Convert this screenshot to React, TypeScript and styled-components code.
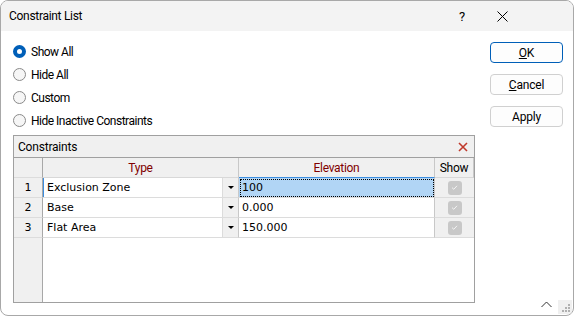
import React from 'react';
import styled, { createGlobalStyle } from 'styled-components';

const GlobalStyle = createGlobalStyle`
  html, body { margin: 0; padding: 0; background: #ffffff; }
  body { font-family: Roboto, 'Noto Sans', sans-serif; font-size: 12px; color: #000; letter-spacing: -0.2px; }
`;

const Window = styled.div`
  width: 574px;
  height: 316px;
  box-sizing: border-box;
  border: 1px solid #a8a8a8;
  border-radius: 8px;
  overflow: hidden;
  display: flex;
  flex-direction: column;
  background: #fff;
  position: relative;
`;

const TitleBar = styled.div`
  height: 30px;
  flex: 0 0 30px;
  background: #f3f3f3;
  display: flex;
  align-items: center;
  padding: 0 51px 0 8px;
  font-size: 12px;
  letter-spacing: -0.3px;
`;

const Title = styled.div`
  flex: 1;
`;

const TitleButton = styled.div`
  width: 40px;
  display: flex;
  justify-content: center;
  align-items: center;
  font-size: 13px;
`;

const Body = styled.div`
  flex: 1;
  display: flex;
  padding: 9px 10px 0 12px;
`;

const LeftCol = styled.div`
  display: flex;
  flex-direction: column;
  width: 462px;
`;

const RadioList = styled.div`
  display: flex;
  flex-direction: column;
  height: 95px;
`;

const RadioRow = styled.label`
  display: flex;
  align-items: center;
  height: 23px;
  gap: 5px;
  letter-spacing: -0.5px;
`;

const RadioDot = styled.span<{ $on?: boolean }>`
  width: 13px;
  height: 13px;
  box-sizing: border-box;
  border-radius: 50%;
  background: ${(p) => (p.$on ? '#ffffff' : '#f6f6f6')};
  border: ${(p) => (p.$on ? '4px solid #005fb8' : '1px solid #8a8a8a')};
`;

const Panel = styled.div`
  border: 1px solid #a0a0a0;
  height: 168px;
  box-sizing: border-box;
  display: flex;
  flex-direction: column;
`;

const PanelHead = styled.div`
  height: 21px;
  background: #f0f0f0;
  border-bottom: 1px solid #a0a0a0;
  display: flex;
  align-items: center;
  justify-content: space-between;
  padding: 0 6px 0 4px;
`;

const Grid = styled.div`
  flex: 1;
  display: grid;
  grid-template-columns: 29px 196px 196px 39px;
  grid-template-rows: 20px 20px 20px 20px 1fr;
  font-family: 'DejaVu Sans', sans-serif;
  font-size: 11px;
  letter-spacing: 0;
`;

const HeadCell = styled.div<{ $maroon?: boolean; $active?: boolean }>`
  background: #f0f0f0;
  border-right: 1px solid #c8c8c8;
  border-bottom: 1px solid ${(p) => (p.$active ? '#3d8ee0' : '#d8d8d8')};
  color: ${(p) => (p.$maroon ? '#800000' : '#000')};
  display: flex;
  align-items: center;
  justify-content: center;
  font-family: Roboto, 'Noto Sans', sans-serif;
  font-size: 12px;
  letter-spacing: -0.3px;
  &:last-child { border-right: none; }
`;

const NumCell = styled.div<{ $fill?: boolean }>`
  background: #f0f0f0;
  border-right: 1px solid #a8a8a8;
  border-bottom: ${(p) => (p.$fill ? 'none' : '1px solid #dcdcdc')};
  display: flex;
  align-items: center;
  justify-content: center;
`;

const TypeCell = styled.div<{ $current?: boolean }>`
  border-right: 1px solid #c8c8c8;
  border-bottom: 1px solid #dcdcdc;
  box-shadow: ${(p) => (p.$current ? 'inset 1px 0 0 #3d8ee0' : 'none')};
  display: flex;
  align-items: stretch;
`;

const TypeText = styled.span`
  flex: 1;
  display: flex;
  align-items: center;
  padding-left: 4px;
`;

const DropButton = styled.span`
  width: 15px;
  background: #f0f0f0;
  border-left: 1px solid #dcdcdc;
  display: flex;
  align-items: center;
  justify-content: center;
  &::after {
    content: '';
    border-left: 3px solid transparent;
    border-right: 3px solid transparent;
    border-top: 3px solid #000;
  }
`;

const ValueCell = styled.div<{ $selected?: boolean }>`
  border-right: 1px solid #c8c8c8;
  border-bottom: 1px solid #dcdcdc;
  background: ${(p) => (p.$selected ? '#b1d5f5' : '#fff')};
  outline: ${(p) => (p.$selected ? '1px dotted #000' : 'none')};
  outline-offset: -2px;
  display: flex;
  align-items: center;
  padding-left: 3px;
`;

const ShowCell = styled.div`
  background: #f0f0f0;
  border-bottom: 1px solid #dcdcdc;
  display: flex;
  align-items: center;
  justify-content: center;
`;

const Check = styled.span`
  width: 14px;
  height: 14px;
  border-radius: 3px;
  background: #c8c8c8;
  display: flex;
  align-items: center;
  justify-content: center;
`;

const EmptyCell = styled.div`
  grid-column: 2 / 5;
`;

const RightCol = styled.div`
  display: flex;
  flex-direction: column;
  gap: 11px;
  margin-left: 15px;
  padding-top: 2px;
`;

const Button = styled.button<{ $default?: boolean }>`
  width: 73px;
  height: 21px;
  box-sizing: border-box;
  background: #fdfdfd;
  border: 1px solid ${(p) => (p.$default ? '#005fb8' : '#d0d0d0')};
  border-radius: 4px;
  font-family: Roboto, 'Noto Sans', sans-serif;
  font-size: 12px;
  letter-spacing: -0.2px;
  padding: 0;
  color: #000;
  & u { text-decoration: underline; }
`;

const Footer = styled.div`
  position: absolute;
  right: 1px;
  bottom: 1px;
  display: flex;
  align-items: flex-end;
  gap: 6px;
`;

const Grip = styled.div`
  width: 14px;
  height: 14px;
  background: #f0f0f0;
`;

const rows = [
  { n: 1, type: 'Exclusion Zone', value: '100' },
  { n: 2, type: 'Base', value: '0.000' },
  { n: 3, type: 'Flat Area', value: '150.000' },
];

const radios = ['Show All', 'Hide All', 'Custom', 'Hide Inactive Constraints'];

export default function App() {
  return (
    <>
      <GlobalStyle />
      <Window>
        <TitleBar>
          <Title>Constraint List</Title>
          <TitleButton>?</TitleButton>
          <TitleButton>
            <svg width='11' height='11' viewBox='0 0 11 11'>
              <path d='M0.5 0.5 L10.5 10.5 M10.5 0.5 L0.5 10.5' stroke='#000' strokeWidth='1' />
            </svg>
          </TitleButton>
        </TitleBar>
        <Body>
          <LeftCol>
            <RadioList>
              {radios.map((r, i) => (
                <RadioRow key={r}>
                  <RadioDot $on={i === 0} />
                  {r}
                </RadioRow>
              ))}
            </RadioList>
            <Panel>
              <PanelHead>
                <span>Constraints</span>
                <svg width='10' height='10' viewBox='0 0 10 10'>
                  <path d='M1 1 L9 9 M9 1 L1 9' stroke='#c0392b' strokeWidth='1.6' />
                </svg>
              </PanelHead>
              <Grid>
                <NumCell />
                <HeadCell $maroon>Type</HeadCell>
                <HeadCell $maroon $active>Elevation</HeadCell>
                <HeadCell>Show</HeadCell>
                {rows.map((r) => (
                  <React.Fragment key={r.n}>
                    <NumCell>{r.n}</NumCell>
                    <TypeCell $current={r.n === 1}>
                      <TypeText>{r.type}</TypeText>
                      <DropButton />
                    </TypeCell>
                    <ValueCell $selected={r.n === 1}>{r.value}</ValueCell>
                    <ShowCell>
                      <Check>
                        <svg width='9' height='9' viewBox='0 0 9 9'>
                          <path d='M2 4.6 L3.8 6.3 L7 2.8' stroke='#f4f4f4' strokeWidth='1' fill='none' />
                        </svg>
                      </Check>
                    </ShowCell>
                  </React.Fragment>
                ))}
                <NumCell $fill />
                <EmptyCell />
              </Grid>
            </Panel>
          </LeftCol>
          <RightCol>
            <Button $default>
              <u>O</u>K
            </Button>
            <Button>
              <u>C</u>ancel
            </Button>
            <Button>Apply</Button>
          </RightCol>
        </Body>
        <Footer>
          <svg width='11' height='7' viewBox='0 0 11 7' style={{ marginBottom: 6 }}>
            <path d='M0.5 6 L5.5 1 L10.5 6' stroke='#333' strokeWidth='1' fill='none' />
          </svg>
          <Grip>
            <svg width='14' height='14' viewBox='0 0 14 14'>
              <g fill='#b0b0b0'>
                <rect x='10' y='4' width='2' height='2' />
                <rect x='7' y='7' width='2' height='2' />
                <rect x='10' y='7' width='2' height='2' />
                <rect x='4' y='10' width='2' height='2' />
                <rect x='7' y='10' width='2' height='2' />
                <rect x='10' y='10' width='2' height='2' />
              </g>
            </svg>
          </Grip>
        </Footer>
      </Window>
    </>
  );
}
